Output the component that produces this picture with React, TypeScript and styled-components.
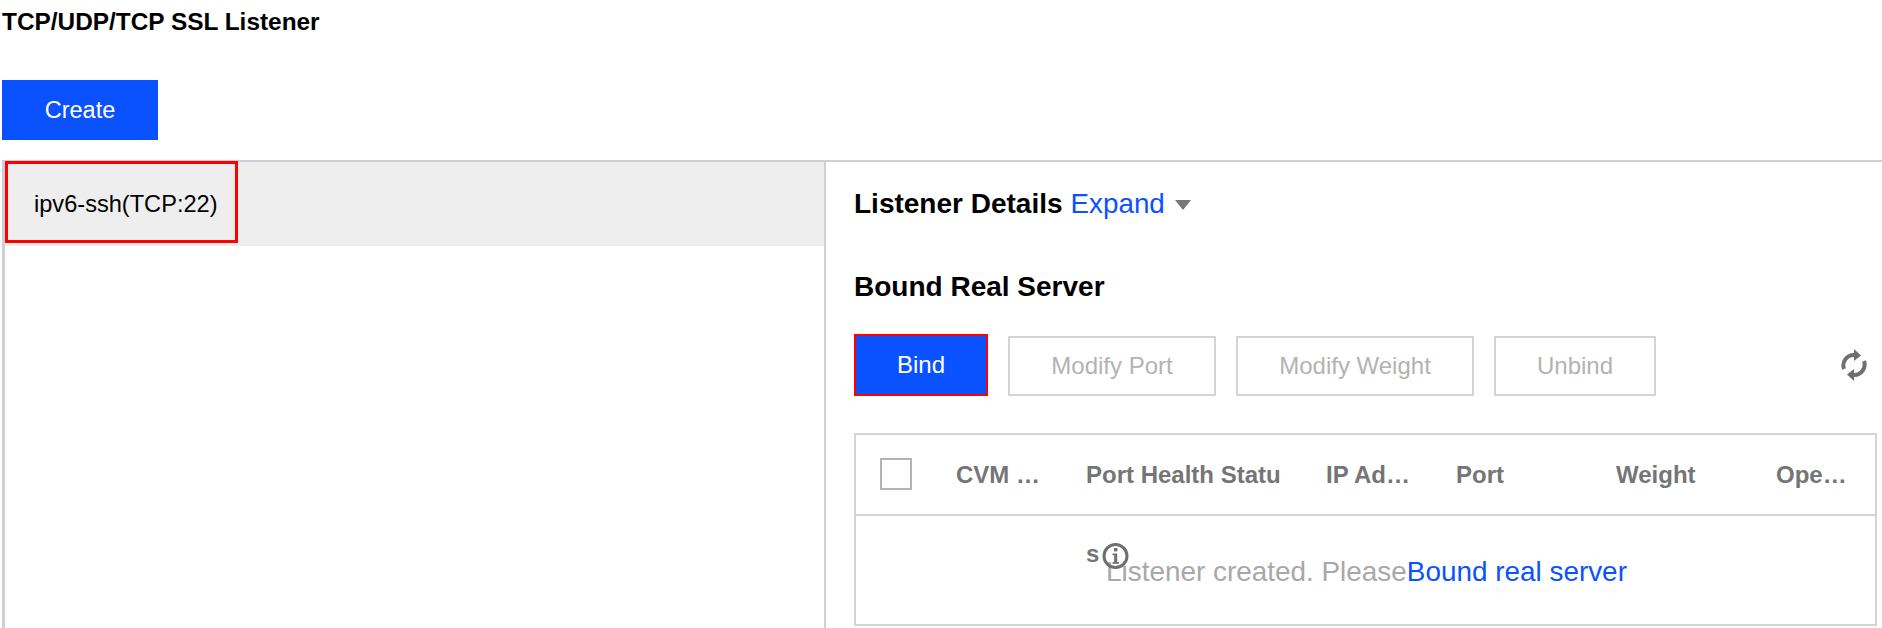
import styled, { createGlobalStyle } from "styled-components";

const GlobalStyle = createGlobalStyle`
  html, body {
    margin: 0;
    padding: 0;
    background: #fff;
  }
  body {
    font-family: "Liberation Sans", Arial, sans-serif;
    color: #000;
    overflow: hidden;
  }
`;

const RefreshIcon = () => (
  <svg width="26" height="32" viewBox="0 0 26 32" fill="none">
    <path d="M3 20 A10.5 10.5 0 0 1 14 6" stroke="#6f6f6f" strokeWidth="4" />
    <path d="M13 0 L20 6.5 L13 12 Z" fill="#6f6f6f" />
    <path d="M23 12 A10.5 10.5 0 0 1 12 26" stroke="#6f6f6f" strokeWidth="4" />
    <path d="M13 20 L6 25.5 L13 32 Z" fill="#6f6f6f" />
  </svg>
);

const InfoIcon = () => (
  <svg width="27" height="28" viewBox="0 0 27 28" fill="none">
    <circle cx="13.5" cy="14" r="11.5" stroke="#6f6f6f" strokeWidth="3" />
    <rect x="12" y="6" width="3.4" height="3.4" fill="#6f6f6f" />
    <path d="M10.5 11.5 H15.2 V20 H17 V21.8 H10.5 V20 H12.2 V13.3 H10.5 Z" fill="#6f6f6f" />
  </svg>
);

const App = () => {
  return (
    <Page>
      <GlobalStyle />
      <Title>TCP/UDP/TCP SSL Listener</Title>
      <CreateButton>Create</CreateButton>
      <Panel>
        <ListColumn>
          <ListRow>
            <ListName>ipv6-ssh(TCP:22)</ListName>
          </ListRow>
        </ListColumn>
        <DetailColumn>
          <DetailHead>
            <SectionTitle>Listener Details</SectionTitle>
            <ExpandLink>Expand</ExpandLink>
            <Caret />
          </DetailHead>
          <SectionTitle>Bound Real Server</SectionTitle>
          <Toolbar>
            <BindButton>Bind</BindButton>
            <GhostButton $width={208}>Modify Port</GhostButton>
            <GhostButton $width={238}>Modify Weight</GhostButton>
            <GhostButton $width={162}>Unbind</GhostButton>
            <RefreshBox>
              <RefreshIcon />
            </RefreshBox>
          </Toolbar>
          <Table>
            <HeadRow>
              <HeadCell>
                <Checkbox />
              </HeadCell>
              <HeadCell $clip>CVM ID/Name</HeadCell>
              <HeadCell $wrap>Port Health Status</HeadCell>
              <HeadCell $clip>IP Address</HeadCell>
              <HeadCell $clip>Port</HeadCell>
              <HeadCell $clip>Weight</HeadCell>
              <HeadCell $clip>Operation</HeadCell>
            </HeadRow>
            <EmptyRow>
              <EmptyIcon>
                <InfoIcon />
              </EmptyIcon>
              <EmptyText>Listener created. Please</EmptyText>
              <BoundLink>Bound real server</BoundLink>
            </EmptyRow>
          </Table>
        </DetailColumn>
      </Panel>
    </Page>
  );
};

export default App;

//styled-components
const Page = styled.div`
  width: 1882px;
  height: 628px;
  overflow: hidden;
  padding-left: 2px;
  box-sizing: border-box;
`;

const Title = styled.h2`
  margin: 0;
  height: 80px;
  font-size: 24.4px;
  line-height: 44px;
  font-weight: 700;
`;

const CreateButton = styled.button`
  display: block;
  width: 156px;
  height: 60px;
  margin: 0;
  padding: 0;
  border: none;
  background: #0a52ff;
  color: #fff;
  font-family: inherit;
  font-size: 23.5px;
`;

const Panel = styled.div`
  display: flex;
  margin-top: 20px;
  border-top: 2px solid #cdd1d5;
  height: 466px;
`;

const ListColumn = styled.div`
  width: 819px;
  flex: none;
  border-left: 3px solid #cdd1d5;
  border-right: 2px solid #cdd1d5;
`;

const ListRow = styled.div`
  height: 84px;
  background: #eee;
`;

const ListName = styled.div`
  position: relative;
  top: -1px;
  width: 233px;
  height: 82px;
  box-sizing: border-box;
  border: 3px solid #f00;
  display: flex;
  align-items: center;
  padding: 4px 0 0 26px;
  font-size: 23.6px;
`;

const DetailColumn = styled.div`
  flex: 1;
  min-width: 0;
  padding-left: 28px;
`;

const DetailHead = styled.div`
  display: flex;
  align-items: center;
  height: 72px;
  margin-top: 6px;
  margin-bottom: 29px;
`;

const SectionTitle = styled.div`
  font-size: 28px;
  line-height: 36px;
  font-weight: 700;
`;

const ExpandLink = styled.span`
  font-size: 27.8px;
  color: #0a52ff;
  margin-left: 8px;
`;

const Caret = styled.span`
  width: 0;
  height: 0;
  margin-left: 10px;
  margin-top: 2px;
  border-left: 8px solid transparent;
  border-right: 8px solid transparent;
  border-top: 10px solid #777;
`;

const Toolbar = styled.div`
  display: flex;
  align-items: flex-end;
  gap: 20px;
  margin-top: 29px;
  height: 62px;
`;

const BindButton = styled.button`
  width: 134px;
  height: 62px;
  padding: 0;
  border: 2px solid #f00;
  background: #0a52ff;
  color: #fff;
  font-family: inherit;
  font-size: 24px;
`;

const GhostButton = styled.button<{ $width: number }>`
  width: ${(p) => p.$width}px;
  height: 60px;
  padding: 0;
  border: 2px solid #d4d4d4;
  background: #fff;
  color: #b3b3b3;
  font-family: inherit;
  font-size: 24px;
`;

const RefreshBox = styled.div`
  margin-left: auto;
  margin-right: 15px;
  align-self: center;
  display: flex;
`;

const Table = styled.div`
  margin: 37px 5px 0 0;
  border: 2px solid #d4d4d4;
  border-bottom: none;
`;

const HeadRow = styled.div`
  display: grid;
  grid-template-columns: 58px 88px 198px 88px 118px 118px 74px;
  column-gap: 42px;
  height: 79px;
  border-bottom: 2px solid #d4d4d4;
  color: #757575;
  font-size: 24px;
  font-weight: 700;
  line-height: 79px;
`;

const HeadCell = styled.div<{ $clip?: boolean; $wrap?: boolean }>`
  min-width: 0;
  ${(p) =>
    p.$clip &&
    `
    white-space: nowrap;
    overflow: hidden;
    text-overflow: ellipsis;
  `}
  ${(p) => p.$wrap && `word-break: break-all;`}
`;

const Checkbox = styled.span`
  display: block;
  width: 28px;
  height: 28px;
  margin: 23px 0 0 24px;
  border: 2px solid #b3b3b3;
`;

const EmptyRow = styled.div`
  display: flex;
  align-items: center;
  height: 110px;
  padding: 4px 0 0 250px;
  box-sizing: border-box;
  border-bottom: 2px solid #d4d4d4;
  position: relative;
  font-size: 27.9px;
`;

const EmptyIcon = styled.span`
  position: absolute;
  left: 246px;
  top: 26px;
  display: flex;
`;

const EmptyText = styled.span`
  color: #a8a8a8;
`;

const BoundLink = styled.span`
  color: #0a52ff;
`;
